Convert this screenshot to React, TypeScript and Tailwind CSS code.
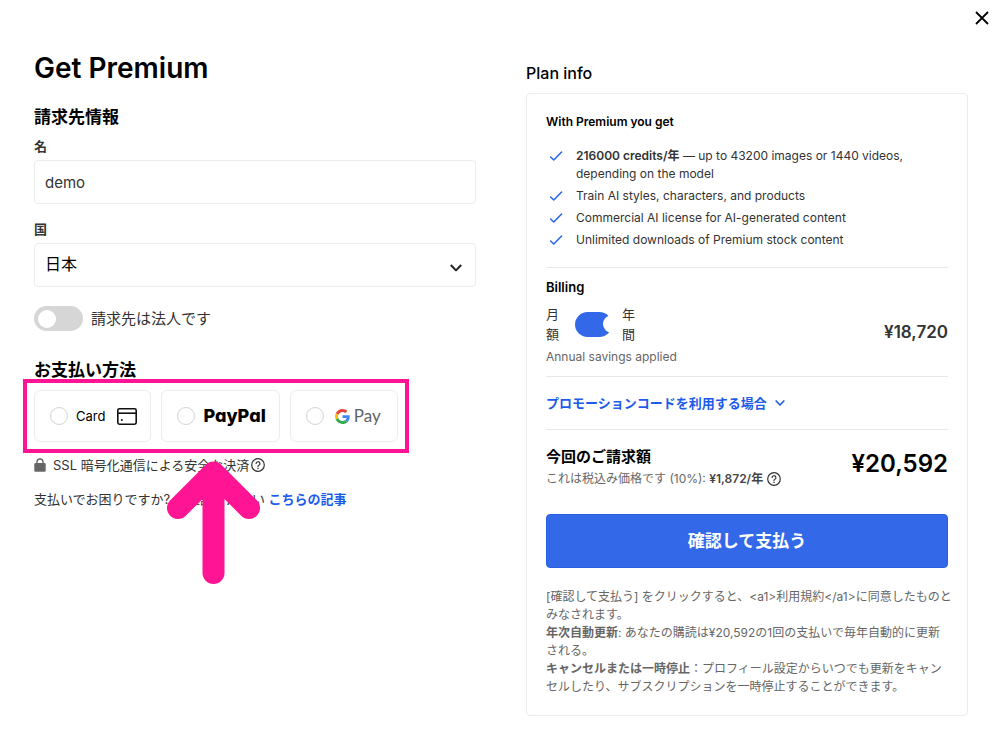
import React from "react";

const features = [
  "Train AI styles, characters, and products",
  "Commercial AI license for AI-generated content",
  "Unlimited downloads of Premium stock content",
];

function CheckIcon() {
  return (
    <svg className="mt-px h-4 w-5 shrink-0" viewBox="0 0 20 16" fill="none" stroke="#2563eb" strokeWidth="1.5" strokeLinecap="round" strokeLinejoin="round" aria-hidden="true">
      <path d="M4.6 9l3.2 3L15.6 4" />
    </svg>
  );
}

function HelpIcon() {
  return (
    <svg className="size-3.5 shrink-0" viewBox="0 0 14 14" fill="none" stroke="#333333" strokeWidth="1.2" strokeLinecap="round" aria-hidden="true">
      <circle cx="7" cy="7" r="6.3" />
      <path d="M5.1 5.6a1.9 1.9 0 1 1 2.8 1.7c-.6.3-.9.6-.9 1.2" />
      <path d="M7 10.3v.1" strokeWidth="1.4" />
    </svg>
  );
}

function ChevronDown({ className }: { className: string }) {
  return (
    <svg className={className} viewBox="0 0 12 12" fill="none" stroke="currentColor" strokeWidth="2" strokeLinejoin="round" aria-hidden="true">
      <path d="M0.8 3L6 8.4l5.2-5.4" />
    </svg>
  );
}

function CardIcon() {
  return (
    <svg className="h-[17px] w-5 shrink-0" viewBox="0 0 20 17" fill="none" stroke="#111111" strokeWidth="1.6" aria-hidden="true">
      <rect x="0.8" y="0.8" width="18.4" height="15.4" rx="1.6" />
      <path d="M1 5.2h18" />
      <circle cx="4.8" cy="12" r="1" fill="#111111" stroke="none" />
    </svg>
  );
}

function GoogleG() {
  return (
    <svg className="size-[15px] shrink-0" viewBox="0 0 48 48" aria-hidden="true">
      <path fill="#4285F4" d="M46.98 24.55c0-1.57-.15-3.09-.38-4.55H24v9.02h12.94c-.58 2.96-2.26 5.48-4.78 7.18l7.73 6c4.51-4.18 7.09-10.36 7.09-17.65z" />
      <path fill="#EA4335" d="M24 9.5c3.54 0 6.71 1.22 9.21 3.6l6.85-6.85C35.9 2.38 30.47 0 24 0 14.62 0 6.51 5.38 2.56 13.22l7.98 6.19C12.43 13.72 17.74 9.5 24 9.5z" />
      <path fill="#FBBC05" d="M10.53 28.59c-.48-1.45-.76-2.99-.76-4.59s.27-3.14.76-4.59l-7.98-6.19C.92 16.46 0 20.12 0 24c0 3.88.92 7.54 2.56 10.78l7.97-6.19z" />
      <path fill="#34A853" d="M24 48c6.48 0 11.93-2.13 15.89-5.81l-7.73-6c-2.15 1.45-4.92 2.3-8.16 2.3-6.26 0-11.57-4.22-13.47-9.91l-7.98 6.19C6.51 42.62 14.62 48 24 48z" />
    </svg>
  );
}

function PaymentOption({ value, children }: { value: string; children: React.ReactNode }) {
  return (
    <label className="flex h-[52px] items-center rounded-md border border-[#ececec] pr-[13px] pl-[15px]">
      <input
        type="radio"
        name="payment"
        value={value}
        aria-label={value}
        className="mr-2 size-[18px] shrink-0 appearance-none rounded-full border border-[#d4d4d4] bg-white checked:border-[5px] checked:border-blue-600"
      />
      {children}
    </label>
  );
}

function BillingForm() {
  return (
    <form className="min-w-0 pt-[15px]" onSubmit={(e) => e.preventDefault()}>
      <h1 className="text-[28px] leading-[34px] font-semibold text-black">Get Premium</h1>

      <h2 className="mt-5 text-[17px] leading-6 font-bold text-black">請求先情報</h2>
      <label htmlFor="name" className="mt-2 block text-[13px] leading-[18px] font-bold">
        名
      </label>
      <input
        id="name"
        defaultValue="demo"
        className="mt-[5px] block h-11 w-full rounded border border-[#ececec] px-2.5 text-[15px] outline-none"
      />

      <label htmlFor="country" className="mt-4 block text-[13px] leading-[18px] font-bold">
        国
      </label>
      <div className="relative mt-[5px] text-black">
        <select
          id="country"
          className="block h-11 w-full appearance-none rounded border border-[#ececec] bg-white px-2.5 pb-0.5 text-base outline-none"
        >
          <option>日本</option>
        </select>
        <ChevronDown className="pointer-events-none absolute top-[19px] right-3.5 size-3 text-[#222222]" />
      </div>

      <label className="mt-[19px] flex items-center gap-2 text-[15px] leading-6">
        <input
          type="checkbox"
          role="switch"
          className="flex h-[25px] w-[49px] shrink-0 appearance-none items-center rounded-full bg-[#d6d6d6] px-1 before:size-[18px] before:rounded-full before:bg-white checked:justify-end checked:bg-blue-600"
        />
        請求先は法人です
      </label>

      <h2 className="mt-[27px] text-[17px] leading-6 font-bold text-black">お支払い方法</h2>
      <div className="relative mt-2 flex w-fit gap-2.5">
        <PaymentOption value="Card">
          <span className="mr-3 text-[13px] leading-5 text-black">Card</span>
          <CardIcon />
        </PaymentOption>
        <PaymentOption value="PayPal">
          <span className="text-lg leading-6 font-extrabold text-black [font-feature-settings:'cv11']">PayPal</span>
        </PaymentOption>
        <PaymentOption value="Google Pay">
          <span className="flex items-center gap-1 px-[3px] font-[Lato,sans-serif] text-[17px] leading-6 text-[#5f6368]">
            <GoogleG />
            Pay
          </span>
        </PaymentOption>
        <div className="pointer-events-none absolute -inset-[11px] border-4 border-[#ff1493]" />
        <svg
          className="pointer-events-none absolute top-[70px] left-[132px] h-[126px] w-24"
          viewBox="0 0 96 126"
          fill="none"
          stroke="#ff1493"
          strokeWidth="22"
          strokeLinecap="round"
          strokeLinejoin="round"
          aria-hidden="true"
        >
          <path d="M12 48L47.5 12.5L83 48M47.5 14V113" />
        </svg>
      </div>

      <p className="mt-3.5 flex items-center text-[13px] leading-[18px]">
        <svg className="mr-[7px] h-[14px] w-3 shrink-0" viewBox="0 0 12 14" aria-hidden="true">
          <path d="M3 6.5V4a3 3 0 0 1 6 0v2.5" fill="none" stroke="#666666" strokeWidth="1.4" />
          <rect x="0.3" y="5" width="11.4" height="8.8" rx="1.2" fill="#666666" />
        </svg>
        <span className="mr-0.5">SSL 暗号化通信による安全な決済</span>
        <HelpIcon />
      </p>
      <p className="mt-4 text-[13px] leading-[18px]">
        支払いでお困りですか? ご確認ください{" "}
        <a href="#help" className="font-bold text-[#1d5bea]">
          こちらの記事
        </a>
      </p>
    </form>
  );
}

function PlanInfo() {
  return (
    <section className="min-w-0 pt-[25px]">
      <h2 className="text-base leading-6 font-medium text-black">Plan info</h2>
      <div className="mt-2 rounded border border-[#ececec] px-[19px] pt-[19px] pb-[19px]">
        <h3 className="text-xs leading-[18px] font-semibold text-black">With Premium you get</h3>
        <ul className="mt-4 flex flex-col gap-1 text-xs leading-[18px]">
          <li className="flex gap-2.5">
            <CheckIcon />
            <span>
              <b className="font-semibold">216000 credits/年</b> — up to 43200 images or 1440 videos,
              <br />
              depending on the model
            </span>
          </li>
          {features.map((text) => (
            <li key={text} className="flex gap-2.5">
              <CheckIcon />
              <span>{text}</span>
            </li>
          ))}
        </ul>

        <div className="mt-[18px] border-t border-[#e8e8e8] pt-2.5 pb-2.5">
          <h3 className="text-[13px] leading-[18px] font-semibold text-black">Billing</h3>
          <div className="mt-2 flex items-start justify-between">
            <div>
              <div className="flex items-center text-[13px] leading-5">
                <span className="w-[13px]">月額</span>
                <input
                  type="checkbox"
                  role="switch"
                  defaultChecked
                  aria-label="年間"
                  className="mr-2.5 ml-4 flex h-[25px] w-[37px] appearance-none items-center rounded-full bg-gray-300 before:size-[18px] before:shrink-0 before:rounded-full before:bg-white checked:bg-[#3369e8] checked:pl-7"
                />
                <span className="w-[13px]">年間</span>
              </div>
              <p className="mt-1 text-xs leading-[18px] text-[#666666]">Annual savings applied</p>
            </div>
            <span className="mt-4 text-[17px] leading-6 font-semibold">¥18,720</span>
          </div>
        </div>

        <div className="border-t border-[#e8e8e8] py-[17px]">
          <button type="button" className="flex items-center gap-2 text-[13px] leading-[18px] font-bold text-[#1d5bea]">
            プロモーションコードを利用する場合
            <ChevronDown className="size-2.5" />
          </button>
        </div>

        <div className="flex items-start justify-between border-t border-[#e8e8e8] pt-4">
          <div>
            <h3 className="text-[15px] leading-[22px] font-bold text-black">今回のご請求額</h3>
            <p className="mt-0.5 flex items-center gap-1 text-xs leading-[18px] text-[#666666]">
              <span>
                これは税込み価格です (10%): <b className="font-semibold text-[#444444]">¥1,872/年</b>
              </span>
              <HelpIcon />
            </p>
          </div>
          <span className="mt-1 text-2xl leading-7 font-semibold text-black">¥20,592</span>
        </div>

        <button type="button" className="mt-[26px] h-[54px] w-full rounded border border-[#2a60e4] bg-[#3369e8] text-[17px] leading-6 font-bold text-white">
          確認して支払う
        </button>

        <div className="mt-5 text-xs leading-[18px] text-[#666666]">
          <p className="whitespace-nowrap">
            [確認して支払う] をクリックすると、&lt;a1&gt;利用規約&lt;/a1&gt;に同意したものと
            <br />
            みなされます。
          </p>
          <p>
            <b className="font-bold">年次自動更新</b>: あなたの購読は¥20,592の1回の支払いで毎年自動的に更新される。
          </p>
          <p>
            <b className="font-bold">キャンセルまたは一時停止</b>：プロフィール設定からいつでも更新をキャンセルしたり、サブスクリプションを一時停止することができます。
          </p>
        </div>
      </div>
    </section>
  );
}

export default function App() {
  return (
    <div lang="ja" className="min-h-screen bg-white font-[Inter,'Noto_Sans_CJK_JP',sans-serif] text-[#333333]">
      <header className="flex justify-end">
        <button type="button" aria-label="閉じる" className="flex size-9 items-center justify-center">
          <svg className="size-3.5" viewBox="0 0 14 14" stroke="#000000" strokeWidth="1.8" aria-hidden="true">
            <path d="M1 1l12 12M13 1L1 13" />
          </svg>
        </button>
      </header>
      <main className="grid grid-cols-2 gap-[50px] pr-8 pb-8 pl-[34px]">
        <BillingForm />
        <PlanInfo />
      </main>
    </div>
  );
}
